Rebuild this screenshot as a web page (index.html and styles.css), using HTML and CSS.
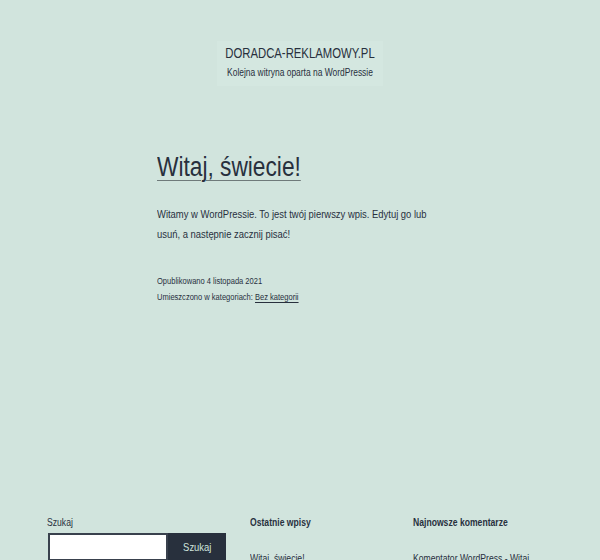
FILE: index.html
```html
<!DOCTYPE html>
<html lang="pl">
<head>
<meta charset="utf-8">
<title>doradca-reklamowy.pl</title>
<link rel="stylesheet" href="styles.css">
</head>
<body>
<header class="site-header">
  <div class="branding">
    <p class="site-title">DORADCA-REKLAMOWY.PL</p>
    <p class="site-desc">Kolejna witryna oparta na WordPressie</p>
  </div>
</header>
<main class="content">
  <article class="post">
    <h1 class="post-title"><a href="#">Witaj, świecie!</a></h1>
    <p class="post-body">Witamy w WordPressie. To jest twój pierwszy wpis. Edytuj go lub usuń, a następnie zacznij pisać!</p>
    <div class="meta">
      <p>Opublikowano 4 listopada 2021</p>
      <p>Umieszczono w kategoriach: <a href="#">Bez kategorii</a></p>
    </div>
  </article>
</main>
<footer class="widgets">
  <section class="widget search">
    <label class="search-label narrow">Szukaj</label>
    <div class="search-row">
      <input class="search-input" type="text">
      <button class="search-btn"><span class="btn-text">Szukaj</span></button>
    </div>
  </section>
  <section class="widget recent">
    <h2 class="widget-title narrow">Ostatnie wpisy</h2>
    <p class="widget-item narrow">Witaj, świecie!</p>
  </section>
  <section class="widget comments">
    <h2 class="widget-title narrow">Najnowsze komentarze</h2>
    <p class="widget-item narrow">Komentator WordPress - Witaj,</p>
  </section>
</footer>
</body>
</html>
```
FILE: styles.css
```css
html, body {
  margin: 0;
  padding: 0;
}
body {
  background: #d1e4dd;
  color: #28303d;
  font-family: "Liberation Sans Narrow", "Liberation Sans", Arial, sans-serif;
  height: 560px;
  overflow: hidden;
}
p { margin: 0; }
a { color: #28303d; }

/* Arial Narrow is not available: condense Liberation Sans horizontally */
.narrow {
  display: block;
  white-space: nowrap;
  transform: scaleX(0.82);
  transform-origin: left center;
}

.site-header {
  display: flex;
  justify-content: center;
  padding-top: 41px;
}
.branding {
  width: 166px;
  text-align: center;
  padding: 4px 0 5px;
  background: #d4e7e0;
}
.site-title,
.site-desc {
  margin-left: -50px;
  margin-right: -50px;
  white-space: nowrap;
  transform: scaleX(0.82);
  transform-origin: center center;
}
.site-title {
  font-size: 13.8px;
  line-height: 18px;
}
.site-desc {
  font-size: 10.3px;
  line-height: 16px;
  margin-top: 2px;
}

.content {
  width: 286px;
  margin: 0 auto;
  padding-top: 63px;
}
.post {
  width: 349px;
  transform: scaleX(0.82);
  transform-origin: left top;
}
.post-title {
  margin: 0;
  font-weight: normal;
  font-size: 27.7px;
  line-height: 36px;
}
.post-title a {
  text-decoration: underline;
  text-decoration-thickness: 1px;
  text-underline-offset: 4px;
  text-decoration-color: #6f7a7a;
}
.post-body {
  margin-top: 19px;
  font-size: 11.5px;
  line-height: 20px;
}
.meta {
  margin-top: 29px;
  font-size: 9.2px;
  line-height: 16px;
}
.meta a {
  text-underline-offset: 2px;
}

.widgets {
  display: grid;
  grid-template-columns: 203px 163px 140px;
  padding: 0 47px;
  margin-top: 210px;
}
.search-label {
  font-size: 10.5px;
  line-height: 14px;
}
.search-row {
  display: flex;
  margin-top: 4px;
}
.search-input {
  width: 120px;
  height: 28px;
  box-sizing: border-box;
  border: 2px solid #39414d;
  background: #fff;
  margin: 0 0 0 1px;
  padding: 0;
}
.search-btn {
  width: 58px;
  height: 28px;
  border: none;
  background: #28303d;
  color: #d1e4dd;
  font-family: inherit;
  font-size: 11.5px;
  padding: 0;
}
.btn-text {
  display: inline-block;
  transform: scaleX(0.82);
}
.widget-title {
  margin: 0;
  font-size: 10.5px;
  line-height: 14px;
  font-weight: bold;
}
.widget-item {
  margin-top: 22px;
  font-size: 10.5px;
  line-height: 14px;
}
```
